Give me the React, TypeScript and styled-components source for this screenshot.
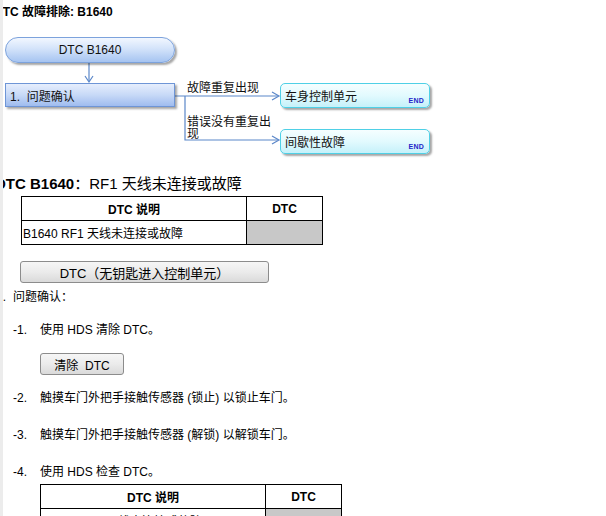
import React from 'react';
import styled, { createGlobalStyle } from 'styled-components';

const Global = createGlobalStyle`
  html, body { margin: 0; padding: 0; background: #fff; }
  body {
    font-family: "Liberation Sans", "Noto Sans CJK SC", Arial, sans-serif;
    color: #000;
    font-size: 12px;
  }
`;

const Page = styled.div`
  display: flex;
  width: 606px;
  height: 516px;
  overflow: hidden;
`;

const Gutter = styled.div`
  flex: none;
  width: 3px;
  background: #ececec;
`;

const Content = styled.div`
  flex: 1;
  overflow: hidden;
`;

const Doc = styled.div`
  margin-left: -10px;
`;

const Title = styled.div`
  margin: 4px 0 0 1px;
  font-weight: bold;
  font-size: 12px;
  line-height: 16px;
  white-space: nowrap;
`;

/* ---------- flow diagram ---------- */

const Flow = styled.div`
  position: relative;
  margin-top: 10px;
  height: 130px;
`;

const Wires = styled.svg`
  position: absolute;
  left: 0;
  top: 0;
  width: 460px;
  height: 130px;
  overflow: visible;
`;

const Node = styled.div<{ $x: number; $y: number; $w: number; $h: number }>`
  position: absolute;
  left: ${(p) => p.$x}px;
  top: ${(p) => p.$y}px;
  width: ${(p) => p.$w}px;
  height: ${(p) => p.$h}px;
  box-sizing: border-box;
  display: flex;
  align-items: center;
  font-size: 12px;
  color: #111;
  box-shadow: 2px 2px 2px rgba(0, 0, 0, 0.35);
`;

const StartNode = styled(Node)`
  justify-content: center;
  border: 1px solid #7ca2dc;
  border-radius: 13px;
  background: linear-gradient(to bottom, #f2f7ff 0%, #d3e3fa 45%, #a6c4f1 100%);
`;

const StepNode = styled(Node)`
  padding-left: 4px;
  border: 1px solid #6e95d6;
  background: linear-gradient(to bottom, #e6eefd 0%, #c7d9f7 50%, #9fbcef 100%);
`;

const EndNode = styled(Node)`
  padding-left: 4px;
  border: 1px solid #4fd0e6;
  border-radius: 5px;
  background: linear-gradient(to bottom, #f5feff 0%, #e2fafe 50%, #c5f1fa 100%);
`;

const EndTag = styled.span`
  position: absolute;
  right: 5px;
  bottom: 3px;
  font-size: 7px;
  font-weight: bold;
  color: #2424c8;
  letter-spacing: 0.2px;
`;

const Branch = styled.div<{ $x: number; $y: number }>`
  position: absolute;
  left: ${(p) => p.$x}px;
  top: ${(p) => p.$y}px;
  width: 90px;
  font-size: 12px;
  line-height: 12px;
  color: #111;
`;

/* ---------- document body ---------- */

const Heading = styled.div`
  margin: 15px 0 0 2px;
  font-size: 15px;
  line-height: 18px;
  white-space: nowrap;
`;

const Strong = styled.b`
  font-weight: bold;
`;

const Table = styled.table<{ $x: number; $top: number }>`
  margin: ${(p) => p.$top}px 0 0 ${(p) => p.$x}px;
  border-collapse: collapse;
  font-size: 12px;
`;

const Th = styled.th<{ $w: number }>`
  width: ${(p) => p.$w}px;
  height: 23px;
  padding: 0 2px;
  border: 1px solid #000;
  font-weight: bold;
  text-align: center;
`;

const Td = styled.td<{ $shade?: boolean }>`
  height: 23px;
  padding: 0 1px;
  border: 1px solid #000;
  text-align: left;
  background: ${(p) => (p.$shade ? '#c8c8c8' : '#fff')};
  white-space: nowrap;
`;

const Button = styled.button<{ $x: number; $top: number; $w: number; $size: number }>`
  display: block;
  margin: ${(p) => p.$top}px 0 0 ${(p) => p.$x}px;
  width: ${(p) => p.$w}px;
  height: 22px;
  padding: 0;
  border: 1px solid #8c8c8c;
  border-radius: 3px;
  background: linear-gradient(to bottom, #f6f6f6 0%, #ebebeb 50%, #dadada 100%);
  font-family: inherit;
  font-size: ${(p) => p.$size}px;
  color: #000;
  white-space: pre;
`;

const Line = styled.div<{ $top: number; $num: number; $lead: number }>`
  display: flex;
  margin-top: ${(p) => p.$top}px;
  padding-left: ${(p) => p.$lead}px;
  font-size: 12px;
  line-height: 16px;
  white-space: nowrap;

  & > span:first-child {
    flex: none;
    width: ${(p) => p.$num}px;
  }
`;

export default function App() {
  return (
    <>
      <Global />
      <Page>
        <Gutter />
        <Content>
          <Doc>
            <Title>DTC 故障排除: B1640</Title>

            <Flow>
              <Wires viewBox="0 0 460 130">
                <g stroke="#5b87c9" strokeWidth="1.2" fill="none">
                  <line x1="96" y1="33" x2="96" y2="51" />
                  <polyline points="92,46 96,52 100,46" />
                  <line x1="182" y1="66" x2="285" y2="66" />
                  <polyline points="279,62 286,66 279,70" />
                  <polyline points="192,66 192,110 285,110" />
                  <polyline points="279,106 286,110 279,114" />
                </g>
              </Wires>
              <StartNode $x={12} $y={7} $w={170} $h={26}>DTC B1640</StartNode>
              <StepNode $x={12} $y={53} $w={170} $h={24}>1.&nbsp;&nbsp;问题确认</StepNode>
              <Branch $x={194} $y={52}>故障重复出现</Branch>
              <Branch $x={194} $y={86}>错误没有重复出现</Branch>
              <EndNode $x={287} $y={53} $w={150} $h={25}>
                车身控制单元
                <EndTag>END</EndTag>
              </EndNode>
              <EndNode $x={287} $y={99} $w={150} $h={25}>
                间歇性故障
                <EndTag>END</EndTag>
              </EndNode>
            </Flow>

            <Heading>
              <Strong>DTC B1640</Strong>：RF1 天线未连接或故障
            </Heading>

            <Table $x={28} $top={3}>
              <thead>
                <tr>
                  <Th $w={220}>DTC 说明</Th>
                  <Th $w={71}>DTC</Th>
                </tr>
              </thead>
              <tbody>
                <tr>
                  <Td>B1640 RF1 天线未连接或故障</Td>
                  <Td $shade />
                </tr>
              </tbody>
            </Table>

            <Button $x={27} $top={16} $w={249} $size={13}>DTC（无钥匙进入控制单元）</Button>

            <Line $top={6} $num={17} $lead={3}>
              <span>1.</span>
              <span>问题确认：</span>
            </Line>

            <Line $top={17} $num={27} $lead={20}>
              <span>-1.</span>
              <span>使用 HDS 清除 DTC。</span>
            </Line>

            <Button $x={47} $top={15} $w={84} $size={12}>清除  DTC</Button>

            <Line $top={15} $num={27} $lead={20}>
              <span>-2.</span>
              <span>触摸车门外把手接触传感器 (锁止) 以锁止车门。</span>
            </Line>

            <Line $top={21} $num={27} $lead={20}>
              <span>-3.</span>
              <span>触摸车门外把手接触传感器 (解锁) 以解锁车门。</span>
            </Line>

            <Line $top={21} $num={27} $lead={20}>
              <span>-4.</span>
              <span>使用 HDS 检查 DTC。</span>
            </Line>

            <Table $x={47} $top={4}>
              <thead>
                <tr>
                  <Th $w={220}>DTC 说明</Th>
                  <Th $w={71}>DTC</Th>
                </tr>
              </thead>
              <tbody>
                <tr>
                  <Td>B1640 RF1 天线未连接或故障</Td>
                  <Td $shade />
                </tr>
              </tbody>
            </Table>
          </Doc>
        </Content>
      </Page>
    </>
  );
}
